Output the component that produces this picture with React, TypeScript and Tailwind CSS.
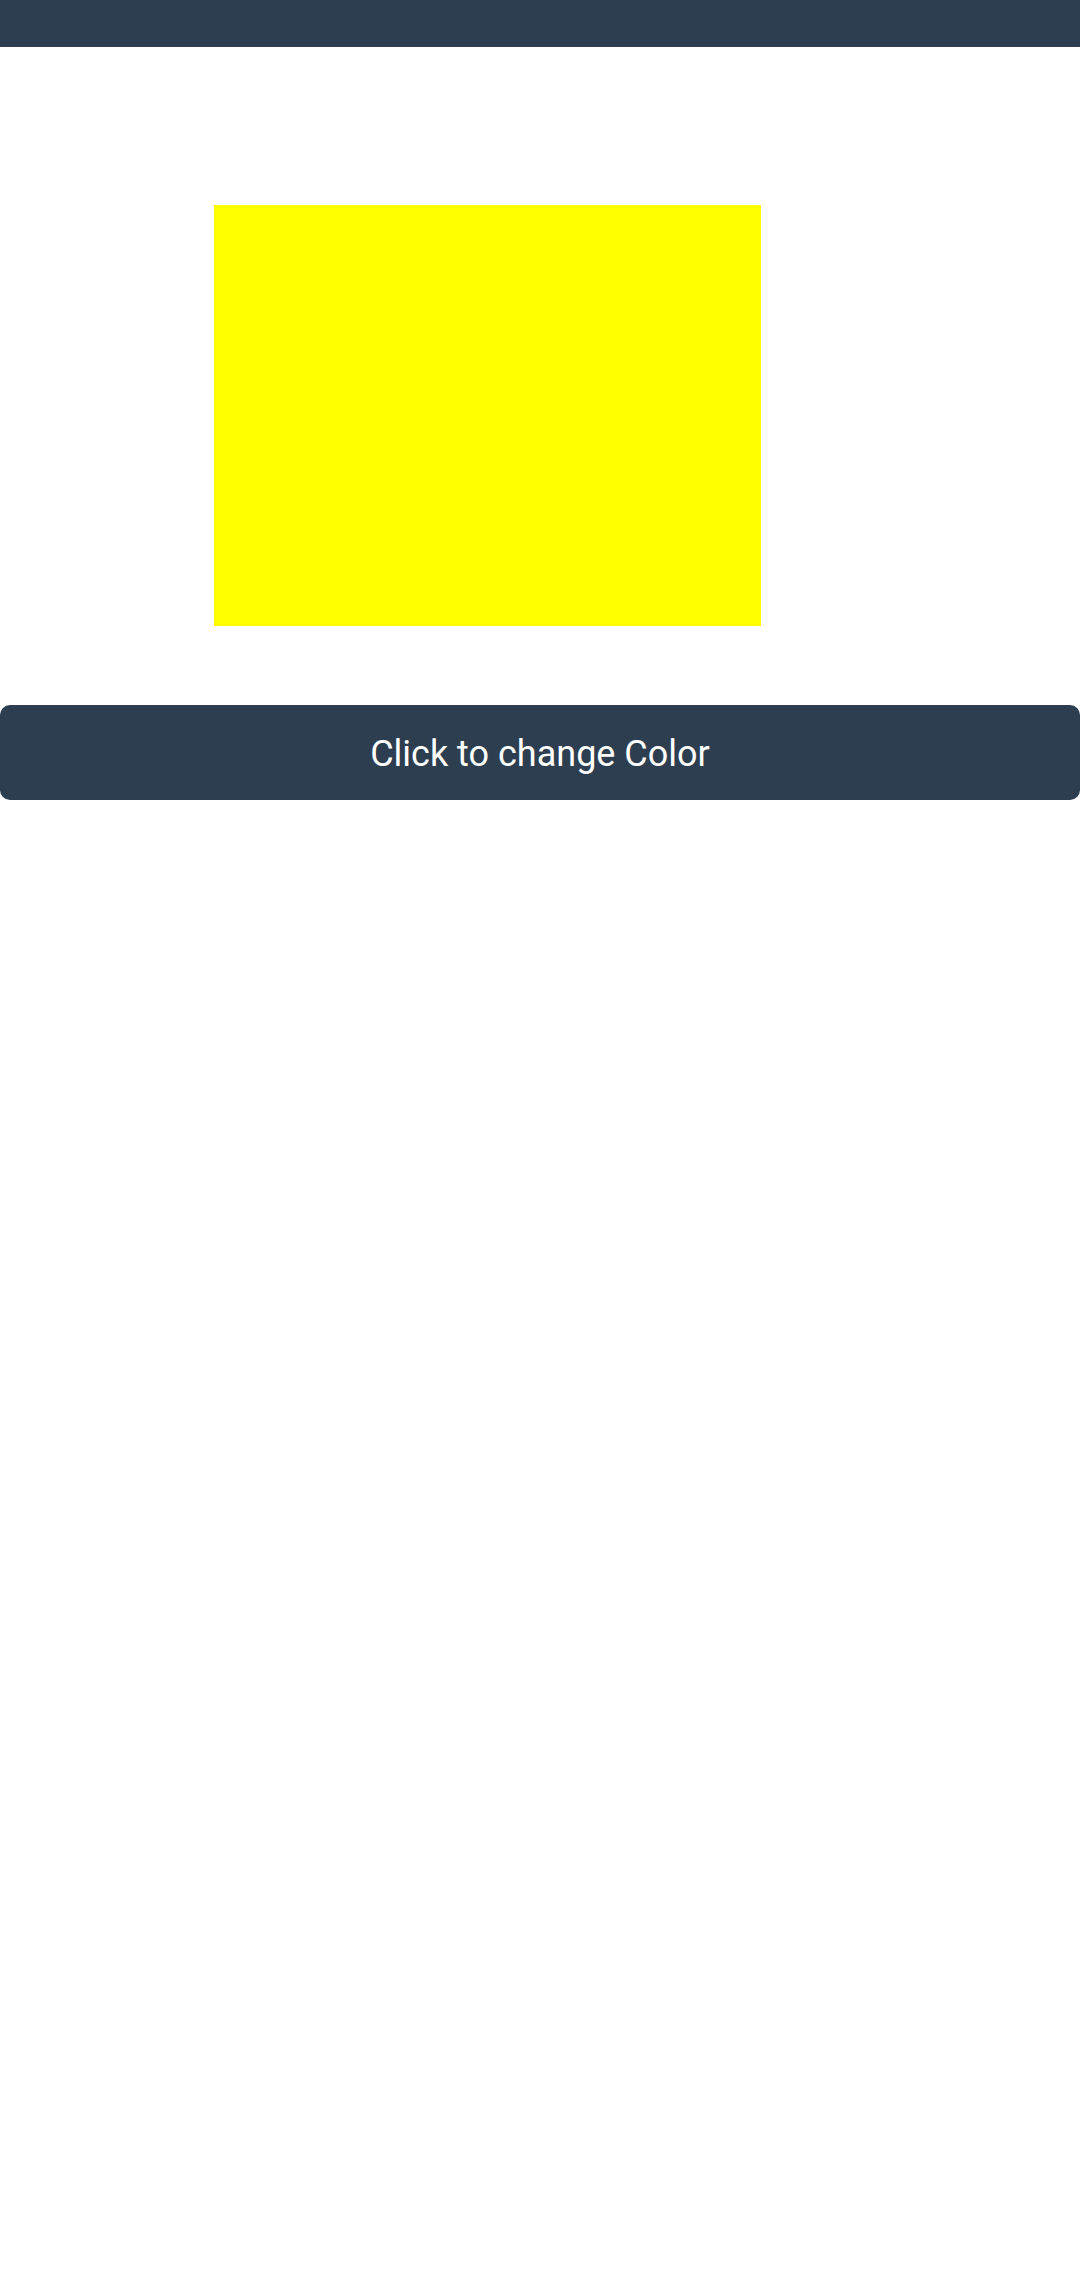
import { useState } from "react";

const colors = ["#ffff00", "#ff0000", "#00ff00", "#0000ff"];

export default function App() {
  const [index, setIndex] = useState(0);

  return (
    <div className="min-h-screen bg-white" style={{ fontFamily: "Roboto, sans-serif" }}>
      {/* top bar */}
      <div className="h-[47px] w-full bg-[#2d3e50]" />

      <div className="mt-[158px] ml-[214px]">
        <div className="h-[421px] w-[547px]" style={{ background: colors[index] }} />
      </div>

      <button
        className="mt-[79px] flex h-[95px] w-full items-center justify-center rounded-[10px] bg-[#2d3e50] pt-[3px] text-[36px] text-white"
        onClick={() => setIndex((i) => (i + 1) % colors.length)}
      >
        Click to change Color
      </button>
    </div>
  );
}
